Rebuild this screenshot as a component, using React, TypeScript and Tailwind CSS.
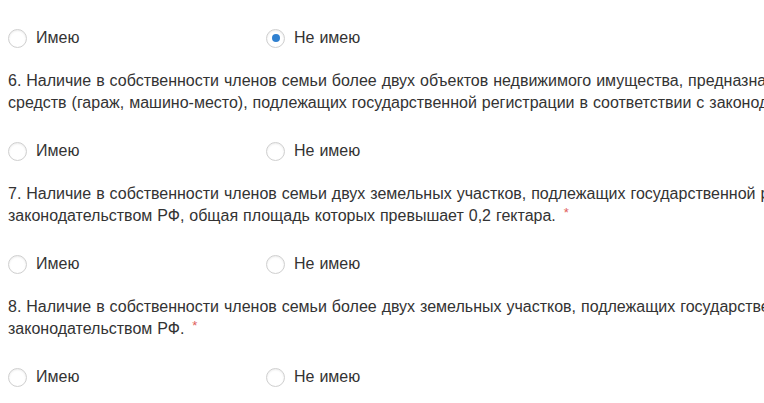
import React from "react";

type Question = {
  lines: string[];
  required: boolean;
};

const questions: Question[] = [
  {
    lines: [
      "6. Наличие в собственности членов семьи более двух объектов недвижимого имущества, предназначенных для хранения транспортных",
      "средств (гараж, машино-место), подлежащих государственной регистрации в соответствии с законодательством РФ.",
    ],
    required: true,
  },
  {
    lines: [
      "7. Наличие в собственности членов семьи двух земельных участков, подлежащих государственной регистрации в соответствии с",
      "законодательством РФ, общая площадь которых превышает 0,2 гектара.",
    ],
    required: true,
  },
  {
    lines: [
      "8. Наличие в собственности членов семьи более двух земельных участков, подлежащих государственной регистрации в соответствии с",
      "законодательством РФ.",
    ],
    required: true,
  },
];

function Radio({ label, checked }: { label: string; checked?: boolean }) {
  return (
    <label className="flex items-center gap-[9px] h-[22px]">
      <span className="w-[19px] h-[19px] shrink-0 rounded-full border border-[#cfcfcf] bg-white shadow-[inset_0_1px_2px_rgba(0,0,0,0.08)] flex items-center justify-center">
        {checked && <span className="w-[8px] h-[8px] rounded-full bg-[#2f80d0]" />}
      </span>
      <span>{label}</span>
    </label>
  );
}

function RadioRow({ checked }: { checked: "yes" | "no" | null }) {
  return (
    <div className="flex h-[22px]">
      <div className="w-[258px]">
        <Radio label="Имею" checked={checked === "yes"} />
      </div>
      <Radio label="Не имею" checked={checked === "no"} />
    </div>
  );
}

export default function App() {
  return (
    <div
      className="w-[764px] h-[403px] overflow-hidden bg-white text-[16px] leading-[22px] text-[#333333] pl-[8px] pt-[27px] [word-spacing:0.5px]"
      style={{ fontFamily: '"Liberation Sans", Arial, sans-serif' }}
    >
      <RadioRow checked="no" />
      {questions.map((q, i) => (
        <div key={i}>
          <div className="mt-[21px] mb-[26px] whitespace-nowrap">
            {q.lines.map((line, j) => (
              <div key={j} className="h-[22px]">
                {line}
                {j === q.lines.length - 1 && q.required && (
                  <span className="text-[#e0605b] text-[13px] leading-none relative top-[-4px] ml-[8px]">*</span>
                )}
              </div>
            ))}
          </div>
          <RadioRow checked={null} />
        </div>
      ))}
    </div>
  );
}
